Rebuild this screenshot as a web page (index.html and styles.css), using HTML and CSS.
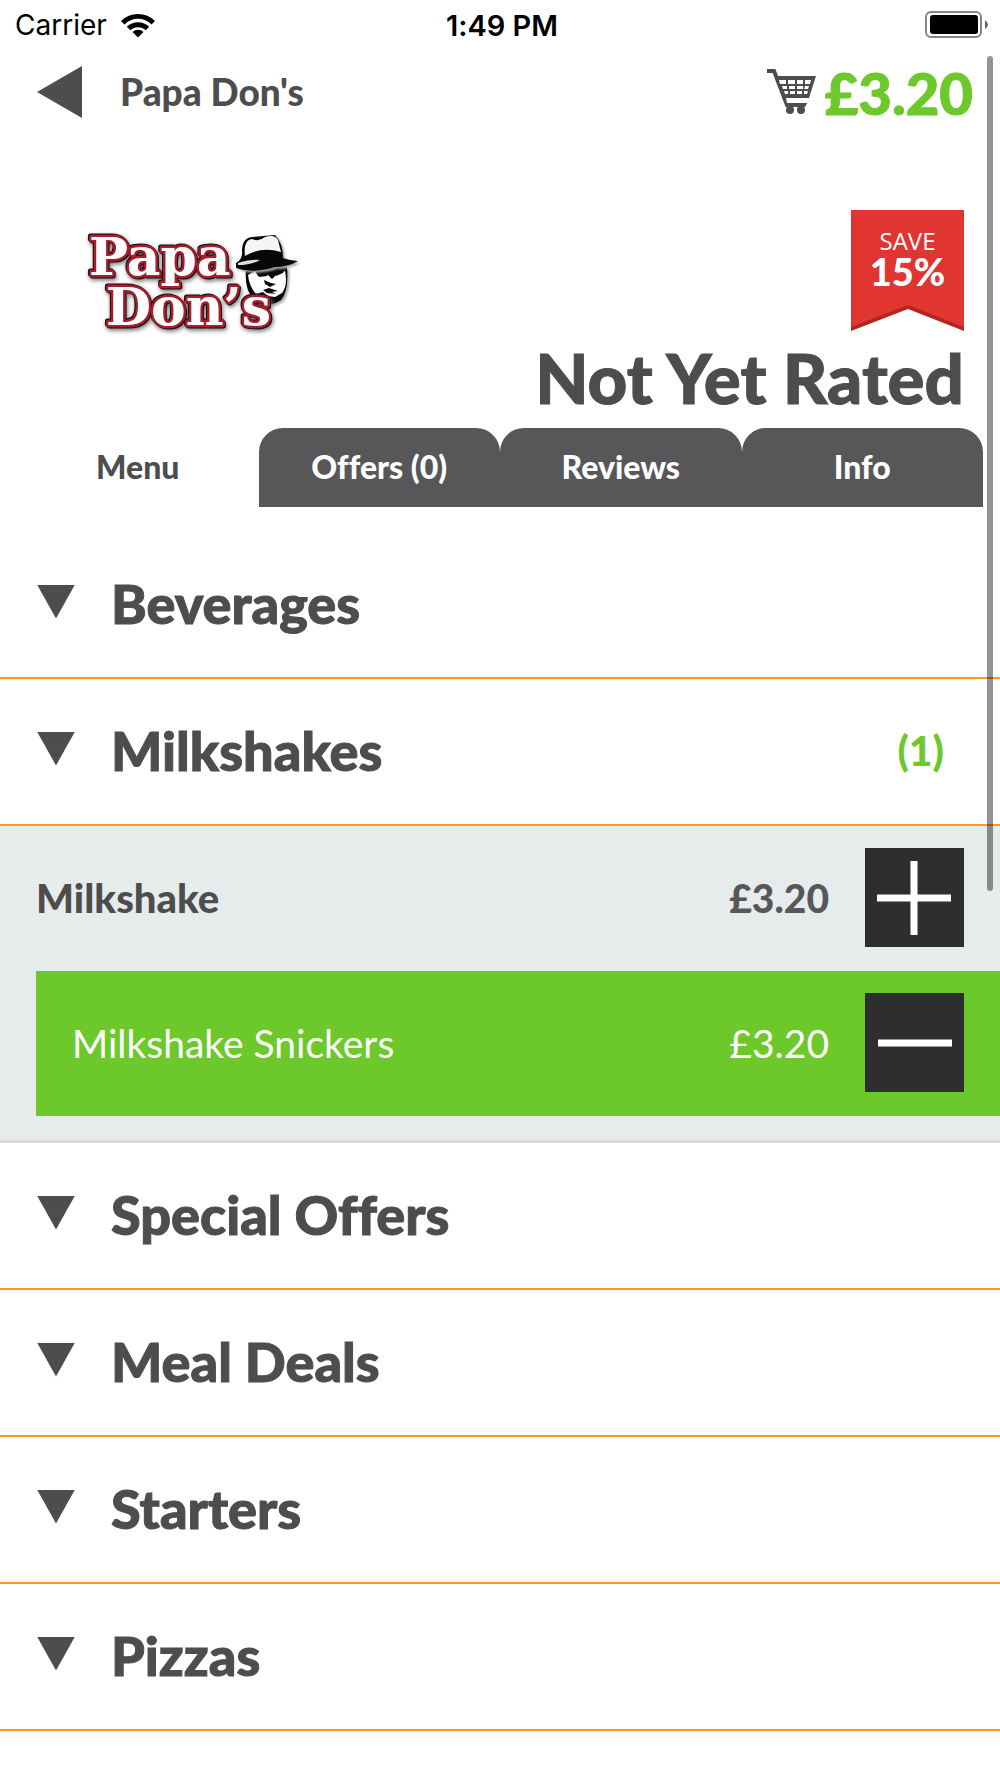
FILE: index.html
```html
<!DOCTYPE html>
<html lang="en">
<head>
    <meta charset="UTF-8">
    <meta name="viewport" content="width=device-width, initial-scale=1.0">
    <title>Papa Don's - Menu</title>
    <link rel="stylesheet" href="styles.css">
</head>
<body>

    <!-- Status bar -->
    <div class="status-bar">
        <div class="carrier">
            <span>Carrier</span>
            <svg class="wifi" viewBox="0 0 34 24">
                <path d="M0 8 A24 24 0 0 1 34 8 L30.500 11.500 A19 19 0 0 0 3.500 11.500 Z"/>
                <path d="M5.800 13.800 A16 16 0 0 1 28.200 13.800 L24.700 17.300 A11 11 0 0 0 9.300 17.300 Z"/>
                <path d="M11.500 19 A8 8 0 0 1 22.500 19 L17 24.500 Z"/>
            </svg>
        </div>
        <div class="time">1:49 PM</div>
        <svg class="battery" viewBox="0 0 64 28">
            <rect x="1" y="1" width="55" height="25" rx="5" fill="#fff" stroke="#858585" stroke-width="2"/>
            <rect x="5" y="4" width="48" height="19" rx="3"/>
            <path d="M60 9 Q66 13.500 60 18 Z" fill="#666"/>
        </svg>
    </div>

    <header>
        <a href="#" class="back">
            <svg class="back-arrow" viewBox="0 0 45 52"><path d="M0 26 L45 0 V52 Z"/></svg>
            <span>Papa Don's</span>
        </a>
        <a href="#" class="cart">
            <svg class="cart-icon" viewBox="0 0 49 46">
                <path d="M0 2 H7 L20 36 H38" fill="none" stroke="#4d4d4d" stroke-width="4"/>
                <path d="M8 7 H49 L42 29 H16 Z"/>
                <path d="M17 29 H43 L42 31 L38 38 H20 Z" fill="#4d4d4d"/>
                <path d="M19 29 H44 V34 H20 Z" fill="#fff"/>
                <path d="M12 11 h7 v4 h-6 z M21 11 h7 v4 h-7 z M30 11 h6 v4 h-6 z M38 11 h6 l-1 4 h-5 z M15 17 h5 v3 h-4 z M22 17 h6 v3 h-6 z M30 17 h6 v3 h-6 z M38 17 h4 l-1 3 h-4 z M17 22 h4 v3 h-3 z M23 22 h5 v3 h-5 z M30 22 h5 v3 h-5 z M37 22 h4 l-1 3 h-3 z" fill="#fff"/>
                <circle cx="23" cy="41" r="4"/>
                <circle cx="34" cy="41" r="4"/>
            </svg>
            <span>£3.20</span>
        </a>
    </header>

    <section class="restaurant">
        <svg class="logo" viewBox="0 0 230 120" role="img" aria-label="Papa Don's">
            <!-- face -->
            <path class="soft" d="M166 42 Q164 66 174 74 Q188 84 201 75 Q209 66 207 42 Z" fill="#080808"/>
            <path d="M168 50 L175 46 L178 51 L187 49 L192 54 L197 49 L205 46 Q208 60 202 68 L195 72 L188 71 L183 67 L176 69 Q169 61 168 50 Z" fill="#fff"/>
            <path d="M176 44 L190 43 L187 51 L179 52 Z M193 44 L205 44 L203 48 L196 51 Z M184 55 L191 58 L196 59 L190 62 L185 59 Z M183 65 L189 63 L198 66 L192 67 L196 69 L187 68 Z" fill="#080808"/>
            <!-- hat -->
            <path class="soft" d="M156 38 Q163 34 162 26 Q162 13 172 12 L195 10 Q203 18 203 33 Q211 36 218 36 Q208 42 195 42 Q173 49 156 43 Z" fill="#080808"/>
            <path d="M165 31 Q163 15 172 14 Q179 17 185 12 Q195 9 198 15 L201 27 Q181 21 165 31 Z" fill="#f5f5f5"/>
            <path d="M158 38 Q171 34 180 35 Q171 40 158 40 Z" fill="#ddd"/>
            <g class="logo-text">
                <text x="9" y="50">Papa</text>
                <text x="26" y="100">Don’s</text>
            </g>
        </svg>
        <div class="summary">
            <div class="ribbon">
                <svg class="ribbon-shape" viewBox="0 0 113 121" preserveAspectRatio="none">
                    <path d="M0 0 H113 V121 L57 99 L0 121 Z" fill="#b3251f"/>
                    <path d="M0 0 H113 V117 L57 95 L0 117 Z" fill="#e03530"/>
                </svg>
                <span class="save">SAVE</span>
                <strong>15%</strong>
            </div>
            <h1>Not Yet Rated</h1>
        </div>
    </section>

    <nav class="tabs">
        <a href="#" class="active">Menu</a>
        <a href="#">Offers (0)</a>
        <a href="#">Reviews</a>
        <a href="#">Info</a>
    </nav>

    <main>
        <button class="category"><span class="arrow"></span><span>Beverages</span></button>
        <button class="category"><span class="arrow"></span><span>Milkshakes</span><span class="count">(1)</span></button>

        <div class="items">
            <div class="item">
                <span class="name">Milkshake</span>
                <span class="price">£3.20</span>
                <button class="qty" aria-label="Add">
                    <svg viewBox="0 0 99 99"><path d="M12 50 H86 M49 13 V87"/></svg>
                </button>
            </div>
            <div class="item selected">
                <span class="name">Milkshake Snickers</span>
                <span class="price">£3.20</span>
                <button class="qty" aria-label="Remove">
                    <svg viewBox="0 0 99 99"><path d="M13 50 H87"/></svg>
                </button>
            </div>
        </div>

        <button class="category"><span class="arrow"></span><span>Special Offers</span></button>
        <button class="category"><span class="arrow"></span><span>Meal Deals</span></button>
        <button class="category"><span class="arrow"></span><span>Starters</span></button>
        <button class="category"><span class="arrow"></span><span>Pizzas</span></button>
    </main>

    <div class="scroll-thumb"></div>

</body>
</html>
```

FILE: styles.css
```css
* {
    margin: 0;
    padding: 0;
    box-sizing: border-box;
}

body {
    font-family: Lato, sans-serif;
    font-weight: 900;
    font-variant-ligatures: none;
    background-color: #ffffff;
    color: #4d4d4d;
}

a {
    color: inherit;
    text-decoration: none;
}

svg {
    display: block;
}

/* Status bar */
.status-bar {
    display: grid;
    grid-template-columns: 1fr auto 1fr;
    align-items: center;
    height: 50px;
    padding: 0 11px 0 15px;
    font-family: Inter, sans-serif;
    font-size: 28px;
    font-weight: 400;
    color: #000000;
}

.carrier {
    display: flex;
    align-items: center;
    gap: 14px;
}

.wifi {
    width: 34px;
    height: 24px;
}

.time {
    font-size: 29px;
    font-weight: 600;
}

.battery {
    width: 64px;
    height: 28px;
    justify-self: end;
}

/* Header */
header {
    display: flex;
    justify-content: space-between;
    align-items: center;
    height: 84px;
    padding: 0 27px 0 37px;
}

.back {
    display: flex;
    align-items: center;
    gap: 38px;
    font-size: 37px;
    line-height: 52px;
}

.back-arrow {
    width: 45px;
    height: 52px;
    fill: #4d4d4d;
}

.cart {
    display: flex;
    align-items: center;
    gap: 9px;
    font-size: 58px;
    color: #6dc92b;
    -webkit-text-stroke: 1px;
}

.cart-icon {
    width: 49px;
    height: 46px;
    fill: #4d4d4d;
}

/* Restaurant */
.restaurant {
    display: flex;
    justify-content: space-between;
    height: 294px;
    padding: 76px 36px 0 80px;
}

.logo {
    width: 230px;
    height: 120px;
    margin-top: 15px;
    overflow: visible;
}

.logo-text {
    font-family: "DejaVu Serif", serif;
    font-size: 52px;
    font-weight: 700;
    fill: #ffffff;
    stroke: #a81c2c;
    stroke-width: 5px;
    stroke-linejoin: round;
    paint-order: stroke;
    filter: drop-shadow(1px 1px 0 #111111) drop-shadow(-1px -1px 0 #111111) drop-shadow(1px 2px 2px #777777);
}

.soft {
    filter: drop-shadow(2px 2px 1px #aaaaaa);
}

.summary {
    display: flex;
    flex-direction: column;
    align-items: flex-end;
}

.ribbon {
    position: relative;
    display: flex;
    flex-direction: column;
    align-items: center;
    width: 113px;
    height: 121px;
    padding-top: 19px;
    color: #ffffff;
}

.ribbon-shape {
    position: absolute;
    inset: 0;
    width: 100%;
    height: 100%;
}

.ribbon .save {
    position: relative;
    font-family: "Open Sans", sans-serif;
    font-size: 24px;
    font-weight: 400;
    line-height: 24px;
}

.ribbon strong {
    position: relative;
    font-size: 38px;
    line-height: 36px;
}

h1 {
    font-size: 69px;
    font-weight: 900;
    line-height: 94px;
    -webkit-text-stroke: 1px;
}

/* Tabs */
.tabs {
    display: grid;
    grid-template-columns: repeat(4, 1fr);
    padding: 0 17px;
}

.tabs a {
    height: 79px;
    border-radius: 24px 24px 0 0;
    background-color: #575759;
    color: #ffffff;
    font-size: 32px;
    line-height: 78px;
    text-align: center;
}

.tabs .active {
    background-color: #ffffff;
    color: #4d4d4d;
}

/* Menu */
main {
    padding: 25px 0 48px;
}

.category {
    display: flex;
    align-items: center;
    width: 100%;
    height: 147px;
    padding: 0 56px 3px 37px;
    border: none;
    border-bottom: 2px solid #ff9818;
    background-color: #ffffff;
    color: #4d4d4d;
    font: inherit;
    font-size: 54px;
    -webkit-text-stroke: 1px;
    cursor: pointer;
}

.arrow {
    width: 38px;
    height: 34px;
    margin: 0 36px 3px 0;
    background-color: #4d4d4d;
    clip-path: polygon(0 0, 100% 0, 50% 100%);
}

.count {
    margin-left: auto;
    color: #6dc92b;
    font-size: 41px;
    -webkit-text-stroke: 0;
}

.items {
    padding-bottom: 24px;
    border-bottom: 3px solid #d8dadb;
    background-color: #e6eceb;
}

.item {
    display: flex;
    align-items: center;
    height: 145px;
    padding: 0 36px 2px;
    font-size: 40px;
}

.item .price {
    margin: 0 36px 0 auto;
    color: #575759;
    font-size: 39px;
}

.item.selected {
    margin-left: 36px;
    background-color: #6dc92b;
    color: #ffffff;
    font-size: 39px;
    font-weight: 400;
}

.item.selected .price {
    color: #ffffff;
}

.qty {
    width: 99px;
    height: 99px;
    border: none;
    background-color: #2d2e2e;
    cursor: pointer;
}

.qty path {
    stroke: #ffffff;
    stroke-width: 7px;
}

.scroll-thumb {
    position: absolute;
    top: 56px;
    right: 7px;
    width: 6px;
    height: 835px;
    border-radius: 3px;
    background-color: rgba(0, 0, 0, 0.42);
}
```
